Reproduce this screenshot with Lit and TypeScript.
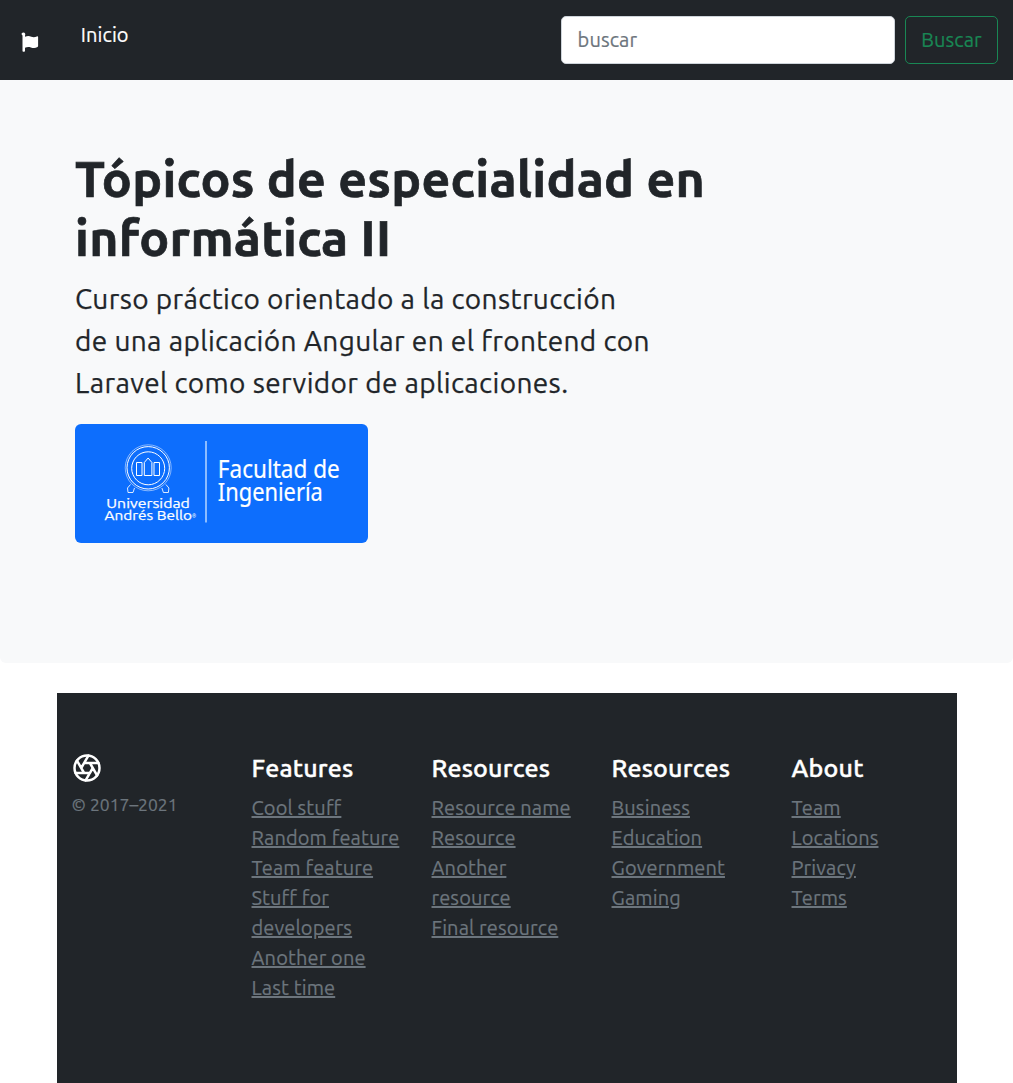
import { LitElement, html, css, svg } from "lit";
import { customElement } from "lit/decorators.js";

const lines = (items: string[]) => items.map((l, i) => html`${i ? html`<br />` : ""}${l}`);

interface Group { title: string; links: string[]; }

const GROUPS: Group[] = [
  { title: "Features", links: ["Cool stuff", "Random feature", "Team feature", "Stuff for developers", "Another one", "Last time"] },
  { title: "Resources", links: ["Resource name", "Resource", "Another resource", "Final resource"] },
  { title: "Resources", links: ["Business", "Education", "Government", "Gaming"] },
  { title: "About", links: ["Team", "Locations", "Privacy", "Terms"] },
];

@customElement("site-header")
class SiteHeader extends LitElement {
  static styles = css`
    :host { display: block; }
    .bar { display: flex; height: 80px; box-sizing: border-box; padding: 16px 15px; background: #212529; font: 20px/30px Ubuntu, "Noto Sans", "Open Sans", sans-serif; letter-spacing: .1px; -webkit-text-stroke: .2px; }
    .flag { width: 20px; height: 20px; margin: 16px 0 0 5px; fill: #fff; }
    .nav { flex: 1; margin: 4px 0 0 40.8px; color: #fff; }
    .search { display: flex; gap: 10px; }
    .field { box-sizing: border-box; width: 334px; height: 48px; border: 1px solid #ced4da; border-radius: 5px; background: #fff; padding: 8px 15.6px; color: #6c757d; }
    .button { box-sizing: border-box; width: 93px; height: 48px; border: 1px solid #198754; border-radius: 5px; padding: 8px 0; text-align: center; color: #198754; white-space: nowrap; }
  `;
  render() {
    return html`<div class="bar">
      <svg class="flag" viewBox="0 0 20 20">
        <path d="M2 .9a2 2 0 0 1 3.1 2.3l-.1.8v.8c2.400-1 4.200-.9 6.300-.1 2.100.8 3.900.5 5.500-.3.700-.3 1.300 0 1.300.7v9c0 .5-.2.8-.6 1-2.100 1.100-4.400 1-6.600.3-2.200-.7-4-.5-5.900.3V19c0 .5-.4.8-.9.8h-.8c-.5 0-.8-.3-.8-.8V3.600A2 2 0 0 1 2 .900z" />
      </svg>
      <div class="nav">Inicio</div>
      <div class="search">
        <div class="field">buscar</div>
        <div class="button">Buscar</div>
      </div>
    </div>`;
  }
}

@customElement("course-hero")
class CourseHero extends LitElement {
  static styles = css`
    :host { display: block; }
    .hero { box-sizing: border-box; height: 583px; padding: 69px 75px 0; border-radius: 0 0 6px 6px; background: #f8f9fa; color: #212529; font-family: Ubuntu, "Noto Sans", "Open Sans", sans-serif; white-space: nowrap; }
    .title { margin: 0 0 11px; font-size: 50px; line-height: 59px; font-weight: 700; letter-spacing: .27px; -webkit-text-stroke: .7px; }
    .lead { margin: 0 0 20px; font-size: 28px; line-height: 42px; letter-spacing: .38px; -webkit-text-stroke: .25px; }
    .logo { display: block; width: 293px; height: 119px; border-radius: 6px; background: #0d6efd; }
    .line { fill: none; stroke: #fff; stroke-width: 1; }
    .soft { opacity: .5; }
    .rule { stroke: #8cbcff; stroke-width: 2; }
    .name { fill: #fff; font-family: Ubuntu, sans-serif; font-size: 13.5px; }
    .strong { stroke: #fff; stroke-width: .25; }
    .mark { font-size: 5px; }
    .faculty { fill: #fff; stroke: #fff; stroke-width: .2; font-family: "Noto Sans", sans-serif; font-size: 24.5px; }
  `;
  render() {
    return html`<div class="hero">
      <h1 class="title">${lines(["Tópicos de especialidad en", "informática II"])}</h1>
      <p class="lead">${lines([
        "Curso práctico orientado a la construcción",
        "de una aplicación Angular en el frontend con",
        "Laravel como servidor de aplicaciones.",
      ])}</p>
      <svg class="logo" viewBox="75 424 293 119">${svg`
        <circle class="line soft" cx="148.200" cy="467.800" r="23" />
        <circle class="line" cx="148.200" cy="467.800" r="21.200" />
        <circle class="line" cx="148.200" cy="468.300" r="16.500" />
        <path class="line" d="M136.500 462.500h5.500v13h-5.500zM154 462.500h5.500v13h-5.500zM144.300 475.500v-13l3.800-4.500 3.800 4.500v13z" />
        <path class="line" stroke-opacity=".85" d="M130.500 484.500l-3 3.500.5 4.500h5l1.500-4.500M165.900 484.500l3 3.500-.5 4.500h-5l-1.500-4.500" />
        <path class="rule" d="M206 441v81.500" />
        <g class="name">
          <text class="strong" x="106.300" y="507.700" textLength="83.500" lengthAdjust="spacingAndGlyphs">Universidad</text>
          <text class="strong" x="104.500" y="520.200" textLength="87.500" lengthAdjust="spacingAndGlyphs">Andrés Bello</text>
          <text class="mark" x="192" y="517.500">®</text>
        </g>
        <g class="faculty">
          <text x="217.800" y="477.600" textLength="122" lengthAdjust="spacingAndGlyphs">Facultad de</text>
          <text x="217.800" y="500.600" textLength="105" lengthAdjust="spacingAndGlyphs">Ingeniería</text>
        </g>`}
      </svg>
    </div>`;
  }
}

@customElement("site-footer")
class SiteFooter extends LitElement {
  static styles = css`
    :host { display: block; }
    .footer { display: grid; grid-template-columns: repeat(5, 180px); box-sizing: border-box; width: 900px; height: 390px; margin: 30px auto 0 56.5px; padding-top: 60px; background: #212529; font: 20px/30px Ubuntu, "Noto Sans", "Open Sans", sans-serif; -webkit-text-stroke: .2px; }
    .col { padding: 0 15px; }
    .aperture { display: block; width: 30px; height: 30px; margin-bottom: 9px; fill: none; stroke: #fff; stroke-width: 2; }
    .copy { font-size: 17.5px; line-height: 26px; color: #6c757d; }
    .heading { margin: 0 0 10px; font-size: 25px; line-height: 30px; font-weight: 500; letter-spacing: .2px; -webkit-text-stroke: .4px; color: #fff; }
    .list { list-style: none; margin: 0; padding: 0; letter-spacing: .12px; }
    .link { color: #6c757d; text-decoration: underline; }
  `;
  render() {
    return html`<footer class="footer">
      <div class="col">
        <svg class="aperture" viewBox="0 0 24 24" stroke-linecap="round" stroke-linejoin="round">
          <circle cx="12" cy="12" r="10" />
          <path d="M14.310 8l5.740 9.940M9.690 8h11.480M7.380 12l5.740-9.940M9.690 16L3.950 6.060M14.310 16H2.830M16.620 12l-5.740 9.940" />
        </svg>
        <div class="copy">© 2017–2021</div>
      </div>
      ${GROUPS.map((g) => html`<div class="col">
        <h5 class="heading">${g.title}</h5>
        <ul class="list">${g.links.map((l) => html`<li><a class="link">${l}</a></li>`)}</ul>
      </div>`)}
    </footer>`;
  }
}

@customElement("app-root")
class AppRoot extends LitElement {
  static styles = css`
    :host { display: block; height: 1083px; overflow: hidden; background: #fff; }
  `;
  render() {
    return html`<site-header></site-header><course-hero></course-hero><site-footer></site-footer>`;
  }
}
